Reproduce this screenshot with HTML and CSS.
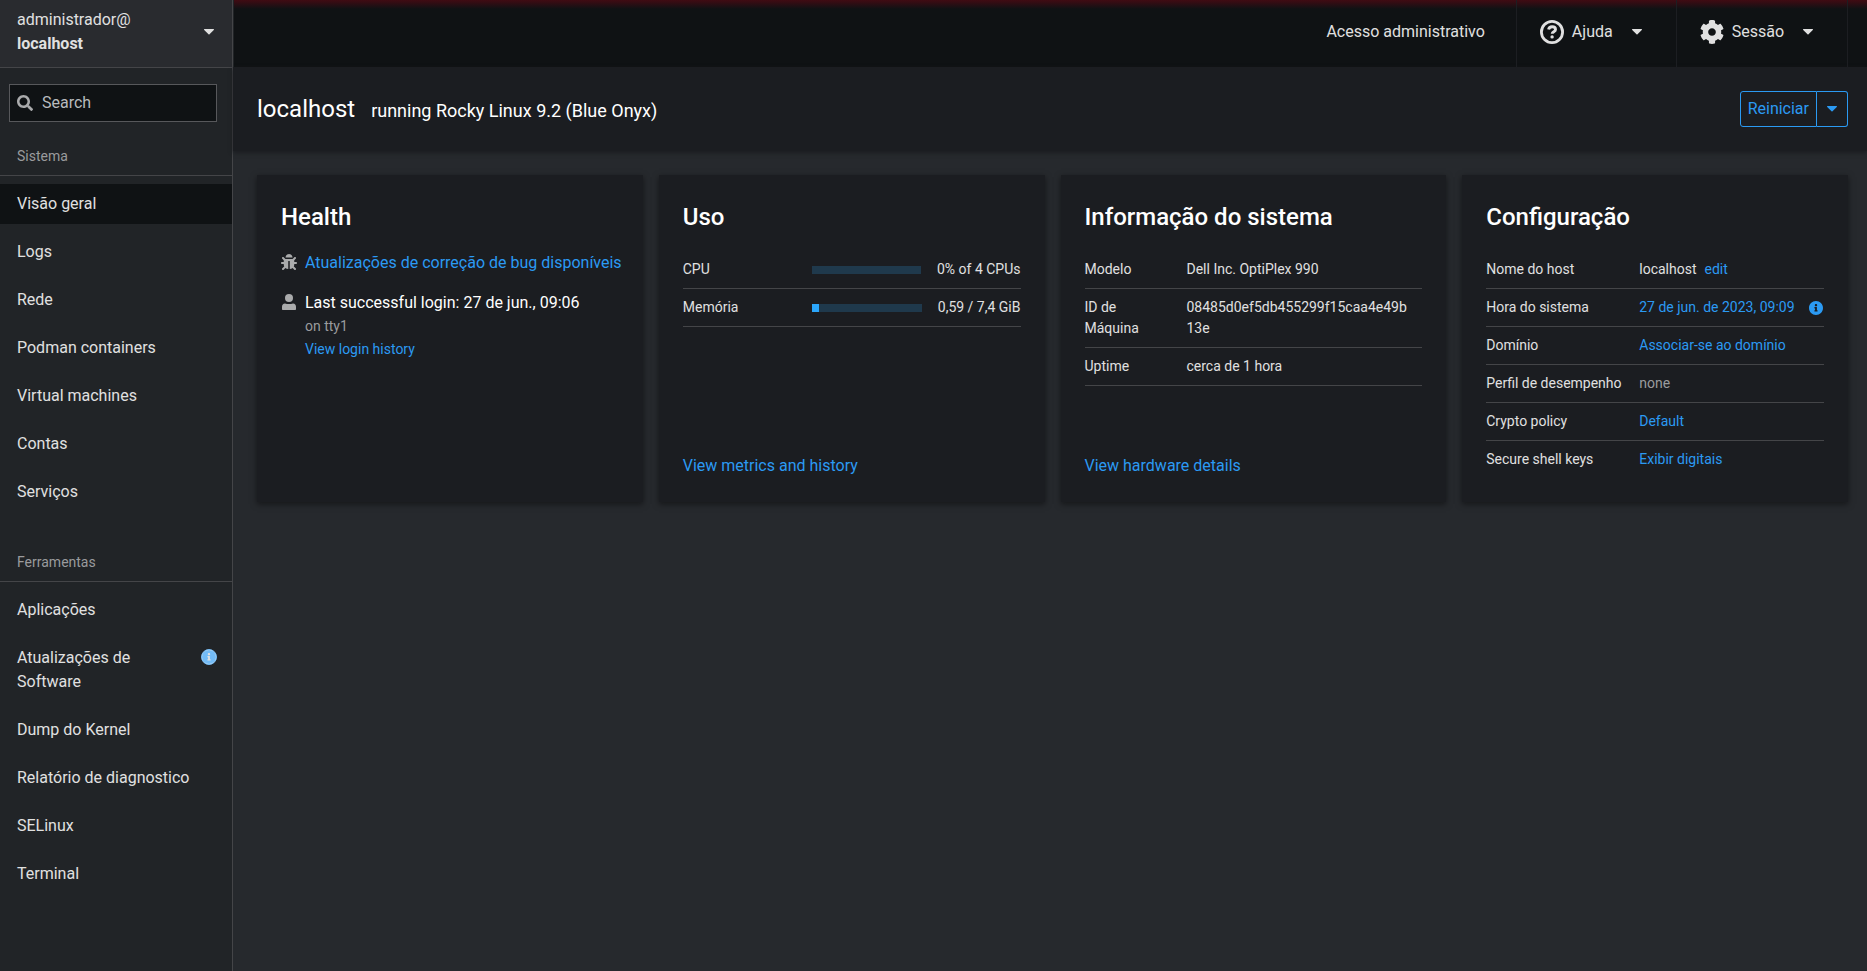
FILE: index.html
```html
<!DOCTYPE html>
<html lang="pt-BR">
<head>
<meta charset="utf-8">
<meta name="viewport" content="width=device-width, initial-scale=1">
<title>Visão geral - localhost</title>
<link rel="stylesheet" href="styles.css">
</head>
<body>
<svg class="sprite" aria-hidden="true">
  <symbol id="info" viewBox="8 8 496 496"><path d="M256 8C119.043 8 8 119.083 8 256c0 136.997 111.043 248 248 248s248-111.003 248-248C504 119.083 392.957 8 256 8zm0 110c23.196 0 42 18.804 42 42s-18.804 42-42 42-42-18.804-42-42 18.804-42 42-42zm56 254c0 6.627-5.373 12-12 12h-88c-6.627 0-12-5.373-12-12v-24c0-6.627 5.373-12 12-12h12v-64h-12c-6.627 0-12-5.373-12-12v-24c0-6.627 5.373-12 12-12h64c6.627 0 12 5.373 12 12v100h12c6.627 0 12 5.373 12 12v24z"/></symbol>
  <symbol id="caret" viewBox="0 0 10 6"><path d="M.6 0h8.8c.6 0 .8.6.4 1L5.5 5.3c-.3.3-.7.3-1 0L.2 1C-.2.6 0 0 .6 0z"/></symbol>
</svg>
<div class="shell">
  <aside class="sidebar">
    <button class="host" type="button">
      <span>administrador@<br><strong>localhost</strong></span>
      <svg class="caret"><use href="#caret"/></svg>
    </button>
    <label class="search">
      <svg class="icon" viewBox="0 0 512 512" aria-hidden="true"><path d="M505 442.7L405.3 343c-4.5-4.5-10.6-7-17-7H372c27.6-35.3 44-79.7 44-128C416 93.1 322.9 0 208 0S0 93.1 0 208s93.1 208 208 208c48.3 0 92.7-16.4 128-44v16.3c0 6.4 2.5 12.5 7 17l99.7 99.7c9.4 9.4 24.6 9.4 33.9 0l28.3-28.3c9.4-9.4 9.4-24.6.1-34zM208 336c-70.7 0-128-57.2-128-128 0-70.7 57.2-128 128-128 70.7 0 128 57.2 128 128 0 70.7-57.2 128-128 128z"/></svg>
      <input type="search" placeholder="Search" aria-label="Search">
    </label>
    <nav>
      <section class="group">
        <h2>Sistema</h2>
        <ul>
          <li><a class="active" href="#" aria-current="page">Visão geral</a></li>
          <li><a href="#">Logs</a></li>
          <li><a href="#">Rede</a></li>
          <li><a href="#">Podman containers</a></li>
          <li><a href="#">Virtual machines</a></li>
          <li><a href="#">Contas</a></li>
          <li><a href="#">Serviços</a></li>
        </ul>
      </section>
      <section class="group">
        <h2>Ferramentas</h2>
        <ul>
          <li><a href="#">Aplicações</a></li>
          <li><a href="#"><span>Atualizações de Software</span><span class="status"><svg><use href="#info"/></svg></span></a></li>
          <li><a href="#">Dump do Kernel</a></li>
          <li><a href="#">Relatório de diagnostico</a></li>
          <li><a href="#">SELinux</a></li>
          <li><a href="#">Terminal</a></li>
        </ul>
      </section>
    </nav>
  </aside>
  <div class="page">
    <header class="topbar">
      <button class="admin" type="button">Acesso administrativo</button>
      <button class="menu" type="button">
        <svg class="menu-icon" viewBox="0 0 24 24"><circle cx="12" cy="12" r="10.6" fill="none" stroke="currentColor" stroke-width="2.8"/><path d="M8.6 9.4c.3-1.700 1.600-2.700 3.500-2.700 1.900 0 3.400 1 3.400 2.700 0 2.400-3.300 2.200-3.300 4.400" fill="none" stroke="currentColor" stroke-width="2.900"/><circle cx="12.1" cy="16.9" r="1.700"/></svg>
        Ajuda
        <svg class="caret"><use href="#caret"/></svg>
      </button>
      <button class="menu" type="button">
        <svg class="menu-icon" viewBox="6 6 500 500"><path d="M487.4 315.7l-42.6-24.6c4.3-23.2 4.3-47 0-70.2l42.6-24.6c4.9-2.8 7.1-8.6 5.5-14-11.1-35.6-30-67.8-54.7-94.6-3.8-4.1-10-5.1-14.8-2.3L380.8 110c-17.9-15.4-38.5-27.3-60.8-35.1V25.8c0-5.6-3.9-10.5-9.4-11.7-36.7-8.2-74.3-7.8-109.2 0-5.5 1.2-9.4 6.1-9.4 11.7V75c-22.2 7.9-42.8 19.8-60.8 35.1L88.7 85.5c-4.9-2.8-11-1.9-14.8 2.3-24.7 26.7-43.6 58.9-54.7 94.6-1.7 5.4.6 11.2 5.5 14L67.3 221c-4.3 23.2-4.3 47 0 70.2l-42.6 24.6c-4.9 2.8-7.1 8.6-5.5 14 11.1 35.6 30 67.8 54.7 94.6 3.8 4.1 10 5.1 14.8 2.3l42.6-24.6c17.9 15.4 38.5 27.3 60.8 35.1v49.2c0 5.6 3.9 10.5 9.4 11.7 36.7 8.2 74.3 7.8 109.2 0 5.5-1.2 9.4-6.1 9.4-11.7v-49.2c22.2-7.9 42.8-19.8 60.8-35.1l42.6 24.6c4.9 2.8 11 1.9 14.8-2.3 24.7-26.7 43.6-58.9 54.7-94.6 1.5-5.5-.7-11.3-5.6-14.1zM256 336c-44.1 0-80-35.9-80-80s35.9-80 80-80 80 35.9 80 80-35.9 80-80 80z"/></svg>
        Sessão
        <svg class="caret"><use href="#caret"/></svg>
      </button>
    </header>
    <main>
      <div class="page-header">
        <h1>localhost</h1>
        <span class="os">running Rocky Linux 9.2 (Blue Onyx)</span>
        <div class="split">
          <button type="button">Reiniciar</button>
          <button type="button" aria-label="Mais ações"><svg class="caret"><use href="#caret"/></svg></button>
        </div>
      </div>
      <div class="cards">
        <section class="card">
          <h2>Health</h2>
          <ul class="health">
            <li>
              <svg class="icon" viewBox="0 0 512 512"><path d="M511.988 288.9c-.478 17.43-15.217 31.1-32.653 31.1H424v16c0 21.864-4.882 42.584-13.6 61.145l60.228 60.228c12.496 12.497 12.496 32.758 0 45.255-12.498 12.497-32.759 12.496-45.256 0l-54.736-54.736C345.886 467.965 314.351 480 280 480V236c0-6.627-5.373-12-12-12h-24c-6.627 0-12 5.373-12 12v244c-34.351 0-65.886-12.035-90.636-32.108l-54.736 54.736c-12.498 12.497-32.759 12.496-45.256 0-12.496-12.497-12.496-32.758 0-45.255l60.228-60.228C92.882 378.584 88 357.864 88 336v-16H32.666C15.23 320 .491 306.33.013 288.9-.484 270.816 14.028 256 32 256h56v-58.745l-46.628-46.628c-12.496-12.497-12.496-32.758 0-45.255 12.498-12.497 32.758-12.497 45.256 0L141.255 160h229.489l54.627-54.627c12.498-12.497 32.758-12.497 45.256 0 12.496 12.497 12.496 32.758 0 45.255L424 197.255V256h56c17.972 0 32.484 14.816 31.988 32.9zM257 0c-61.856 0-112 50.144-112 112h224C369 50.144 318.856 0 257 0z"/></svg>
              <a class="notice" href="#">Atualizações de correção de bug disponíveis</a>
            </li>
            <li>
              <svg class="icon" viewBox="0 0 16 16"><circle cx="8" cy="4" r="4"/><path d="M4 9.4c2.400.8 5.600.8 8 0 1.900.2 3 1.500 3 3.300V15c0 .6-.4 1-1 1H2c-.6 0-1-.4-1-1v-2.300c0-1.800 1.100-3.100 3-3.300z"/></svg>
              <div>
                Last successful login: 27 de jun., 09:06
                <div class="small muted">on tty1</div>
                <a class="small" href="#">View login history</a>
              </div>
            </li>
          </ul>
        </section>
        <section class="card">
          <h2>Uso</h2>
          <table class="usage">
            <tr><th scope="row">CPU</th><td><div class="meter-row"><div class="meter" role="progressbar" aria-label="CPU" aria-valuenow="0"><div style="width:0%"></div></div>0% of 4 CPUs</div></td></tr>
            <tr><th scope="row">Memória</th><td><div class="meter-row"><div class="meter" role="progressbar" aria-label="Memória" aria-valuenow="7"><div style="width:7%"></div></div>0,59 / 7,4 GiB</div></td></tr>
          </table>
          <a class="more" href="#">View metrics and history</a>
        </section>
        <section class="card">
          <h2>Informação do sistema</h2>
          <table class="info">
            <tr><th scope="row">Modelo</th><td>Dell Inc. OptiPlex 990</td></tr>
            <tr><th scope="row">ID de Máquina</th><td>08485d0ef5db455299f15caa4e49b<wbr>13e</td></tr>
            <tr><th scope="row">Uptime</th><td>cerca de 1 hora</td></tr>
          </table>
          <a class="more" href="#">View hardware details</a>
        </section>
        <section class="card">
          <h2>Configuração</h2>
          <table class="config">
            <tr><th scope="row">Nome do host</th><td><span class="pair">localhost <a href="#">edit</a></span></td></tr>
            <tr><th scope="row">Hora do sistema</th><td><span class="pair time"><a href="#">27 de jun. de 2023, 09:09</a> <svg class="hint"><use href="#info"/></svg></span></td></tr>
            <tr><th scope="row">Domínio</th><td><a href="#">Associar-se ao domínio</a></td></tr>
            <tr><th scope="row">Perfil de desempenho</th><td class="muted">none</td></tr>
            <tr><th scope="row">Crypto policy</th><td><a href="#">Default</a></td></tr>
            <tr><th scope="row">Secure shell keys</th><td><a href="#">Exibir digitais</a></td></tr>
          </table>
        </section>
      </div>
    </main>
  </div>
</div>
</body>
</html>
```
FILE: styles.css
```css
* { box-sizing: border-box; }
body {
  margin: 0;
  background: #26292d;
  color: #fff;
  font: 16px/24px Roboto, "Liberation Sans", sans-serif;
}
h1, h2, ul { margin: 0; padding: 0; font-weight: 400; list-style: none; }
a { color: #2b9af3; text-decoration: none; }
button { margin: 0; border: 0; background: none; color: inherit; font: inherit; cursor: pointer; }
svg { display: block; flex: none; fill: currentColor; }
.sprite { display: none; }
.icon { width: 16px; height: 16px; color: #aaabac; }
.caret { width: 10px; height: 6px; }
.muted { color: #9a9b9d; }
.small { font-size: 14px; line-height: 23px; }

.shell { display: flex; min-height: 100vh; }

.sidebar {
  flex: none;
  width: 233px;
  border-right: 1px solid #444548;
  background: #212427;
  color: #e0e0e0;
}
.host {
  display: flex;
  align-items: center;
  justify-content: space-between;
  width: 100%;
  padding: 8px 18px 11px 17px;
  border-bottom: 1px solid #444548;
  background: #292b2f;
  text-align: left;
}
.host strong { font-weight: 700; }
.search {
  display: flex;
  align-items: center;
  gap: 9px;
  height: 38px;
  margin: 16px 15px 0 9px;
  padding: 0 7px;
  border: 1px solid #57585b;
  background: #0f1214;
}
.search input {
  flex: 1;
  min-width: 0;
  padding: 0;
  border: 0;
  outline: 0;
  background: none;
  color: #e0e0e0;
  font: inherit;
}
.search input::placeholder { color: #b8bbbe; opacity: 1; }
.group { padding-top: 20px; }
.group + .group { padding-top: 36px; }
.group h2 {
  padding: 4px 17px 8px;
  border-bottom: 1px solid #444548;
  color: #9a9b9d;
  font-size: 14px;
  line-height: 21px;
}
.group ul { display: flex; flex-direction: column; gap: 8px; padding-top: 8px; }
.group a {
  display: flex;
  justify-content: space-between;
  gap: 32px;
  padding: 8px 15px 8px 17px;
  color: #e0e0e0;
}
.group a.active { background: #0f1214; }
.status { flex: none; padding-top: 3px; color: #73bcf7; }
.status svg { width: 16px; height: 16px; border: 1px solid #73bcf7; border-radius: 50%; background: #e0e0e0; }

.page { flex: 1; min-width: 0; }
.topbar {
  display: flex;
  justify-content: flex-end;
  height: 67px;
  padding-right: 19px;
  border-left: 1px solid #212427;
  background: linear-gradient(#400b12, #360c13 2px, #0f1214 9px);
  color: #e0e0e0;
}
.topbar button { padding-bottom: 4px; border-right: 1px solid #1c1e22; }
.admin { padding: 0 31px; }
.menu { display: flex; align-items: center; gap: 8px; padding: 0 34px 0 23px; }
.menu .caret { margin-left: 11px; }
.menu-icon { width: 24px; height: 24px; }

.page-header {
  display: flex;
  align-items: center;
  gap: 16px;
  padding: 24px 19px 24px 24px;
  background: #1b1d21;
  box-shadow: 0 2px 4px #1b1d21;
}
.page-header h1 { font-size: 24px; line-height: 36px; }
.os { padding-top: 3px; font-size: 18px; }
.split { display: flex; margin-left: auto; color: #2b9af3; }
.split button { height: 36px; padding: 0 7px; border: 1px solid #2b9af3; border-radius: 3px 0 0 3px; }
.split button + button { padding: 0 10px; border-left: 0; border-radius: 0 3px 3px 0; }

.cards {
  display: grid;
  grid-template-columns: repeat(auto-fit, minmax(320px, 1fr));
  gap: 16px;
  padding: 24px 19px 24px 24px;
}
.card {
  display: flex;
  flex-direction: column;
  padding: 24px;
  background: #1b1d21;
  box-shadow: 0 2px 6px rgba(3, 3, 3, .5);
}
.card h2 { margin-bottom: 16px; font-size: 24px; font-weight: 500; line-height: 36px; }
.more { margin-top: auto; }
.health { display: flex; flex-direction: column; gap: 16px; }
.health li { display: flex; gap: 8px; }
.health .icon { margin-top: 3px; }
.health a { display: block; }
.notice { white-space: nowrap; }

table { width: 100%; border-spacing: 0; table-layout: fixed; font-size: 14px; line-height: 21px; color: #e0e0e0; }
th, td { padding: 8px 0; border-bottom: 1px solid #444548; font-weight: 400; text-align: left; vertical-align: top; }
.config tr:last-child > * { border-bottom: 0; }
.usage th { width: 129px; }
.info th { width: 102px; padding-right: 24px; }
.config th { width: 153px; }
.meter-row { display: flex; align-items: center; gap: 16px; white-space: nowrap; }
.meter { flex: 1; height: 8px; background: #1f394c; }
.meter div { height: 100%; background: #2ba6fb; }
.pair { display: flex; align-items: center; gap: 8px; }
.time { justify-content: space-between; padding-right: 1px; }
.hint { width: 14px; height: 14px; color: #2b9af3; }
td.muted { color: #9a9b9d; }
```
